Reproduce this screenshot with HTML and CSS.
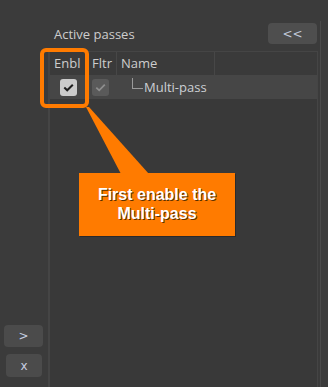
FILE: index.html
```html
<!DOCTYPE html>
<html>
<head>
<meta charset="utf-8">
<link rel="stylesheet" href="styles.css">
</head>
<body>
<div class="app">
  <aside class="side">
    <button class="sbtn sbtn-add">&gt;</button>
    <button class="sbtn sbtn-del">x</button>
  </aside>
  <main class="main">
    <div class="titlebar">
      <span class="title">Active passes</span>
      <button class="collapse">&lt;&lt;</button>
    </div>
    <div class="table">
      <div class="thead">
        <div class="th c-enbl">Enbl</div>
        <div class="th c-fltr">Fltr</div>
        <div class="th c-name">Name</div>
        <div class="th c-rest"></div>
      </div>
      <div class="trow">
        <div class="td c-enbl"><span class="chk chk-on"><svg viewBox="0 0 17 17" width="17" height="17"><path d="M4.3 8.6 L7.2 11.3 L12.8 5.7" fill="none" stroke="#1e1e1e" stroke-width="2"/></svg></span></div>
        <div class="td c-fltr"><span class="chk chk-off"><svg viewBox="0 0 17 17" width="17" height="17"><path d="M4.3 8.6 L7.2 11.3 L12.8 5.7" fill="none" stroke="#8e8e8e" stroke-width="1.8"/></svg></span></div>
        <div class="td c-name"><span class="tree"></span><span class="pname">Multi-pass</span></div>
      </div>
    </div>
  </main>
  <div class="splitter"></div>
</div>
<div class="highlight"></div>
<svg class="pointer" width="328" height="387" viewBox="0 0 328 387"><polygon points="86,107 89,107 149,174 121,174" fill="#ff7b00"/></svg>
<div class="callout">First enable the<br>Multi-pass</div>
</body>
</html>
```

FILE: styles.css
```css
html, body {
  margin: 0;
  padding: 0;
}
body {
  width: 328px;
  height: 387px;
  background: #3b3b3b;
  overflow: hidden;
  position: relative;
  font-family: "Open Sans", "Noto Sans", sans-serif;
  font-size: 13px;
  color: #cdcdcd;
}
.app {
  display: flex;
  height: 387px;
}
.side {
  width: 48px;
  display: flex;
  flex-direction: column;
  align-items: flex-start;
  justify-content: flex-end;
  padding-bottom: 10px;
  box-sizing: border-box;
  gap: 7px;
}
.sbtn {
  border: none;
  background: #4b4b4b;
  border-radius: 4px;
  color: #c6cee0;
  font-family: "DejaVu Sans", sans-serif;
  font-size: 12px;
  padding: 0;
  height: 22px;
}
.sbtn-add { width: 39px; margin-left: 4px; }
.sbtn-del { width: 36px; height: 23px; margin-left: 6px; }
.main {
  width: 270px;
  display: flex;
  flex-direction: column;
}
.titlebar {
  height: 51px;
  display: flex;
  align-items: flex-start;
  justify-content: space-between;
  box-sizing: border-box;
}
.title {
  margin-left: 6px;
  margin-top: 25px;
  font-size: 13px;
}
.collapse {
  margin-top: 23px;
  margin-right: 1px;
  width: 49px;
  height: 21px;
  border: none;
  border-radius: 4px;
  background: #4e4e4e;
  color: #c0c8d8;
  font-family: "DejaVu Sans", sans-serif;
  font-size: 12px;
  letter-spacing: 0px;
  padding: 0;
}
.table {
  flex: 1;
  border-top: 1px solid #454545;
  border-left: 2px solid #454545;
  border-right: 1px solid #454545;
  background: #393939;
  box-sizing: border-box;
}
.thead {
  display: flex;
  height: 23px;
  background: #3a3a3a;
}
.th {
  box-sizing: border-box;
  border-right: 1px solid #474747;
  line-height: 23px;
  padding-left: 4px;
  white-space: nowrap;
}
.c-enbl { width: 38px; }
.c-fltr { width: 29px; }
.c-name { width: 98px; }
.c-rest { flex: 1; border-right: none; }
.trow {
  display: flex;
  height: 24px;
  background: #464646;
  align-items: center;
}
.td {
  box-sizing: border-box;
  height: 24px;
  display: flex;
  align-items: center;
}
.td.c-enbl { padding-left: 10px; }
.td.c-fltr { padding-left: 4px; }
.td.c-name { padding-left: 15px; width: auto; }
.chk {
  display: block;
  width: 17px;
  height: 17px;
  border-radius: 3px;
}
.chk svg { display: block; }
.chk-on { background: #cbcbcb; }
.chk-off { background: #5a5a5a; }
.tree {
  width: 10px;
  height: 10px;
  border-left: 1px solid #9a9a9a;
  border-bottom: 1px solid #9a9a9a;
  align-self: flex-start;
  margin-top: 3px;
  margin-right: 1px;
}
.pname {
  color: #ccd0d4;
  font-size: 13px;
}
.splitter {
  width: 1px;
  margin-left: 2px;
  margin-top: 21px;
  background: #4a4a4a;
}
.highlight {
  position: absolute;
  left: 40px;
  top: 48px;
  width: 49px;
  height: 60px;
  box-sizing: border-box;
  border: 4px solid #ff7b00;
  border-radius: 6px;
}
.pointer {
  position: absolute;
  left: 0;
  top: 0;
}
.callout {
  position: absolute;
  left: 79px;
  top: 173px;
  width: 156px;
  height: 63px;
  box-sizing: border-box;
  background: #ff7b00;
  box-shadow: 1px 1px 0 #2a2a2a;
  color: #ffffff;
  font-family: "Liberation Sans", Arial, sans-serif;
  font-weight: bold;
  font-size: 16px;
  line-height: 19px;
  text-align: center;
  padding-top: 12px;
  text-shadow: 1px 1px 0 #5a3000;
}
```
